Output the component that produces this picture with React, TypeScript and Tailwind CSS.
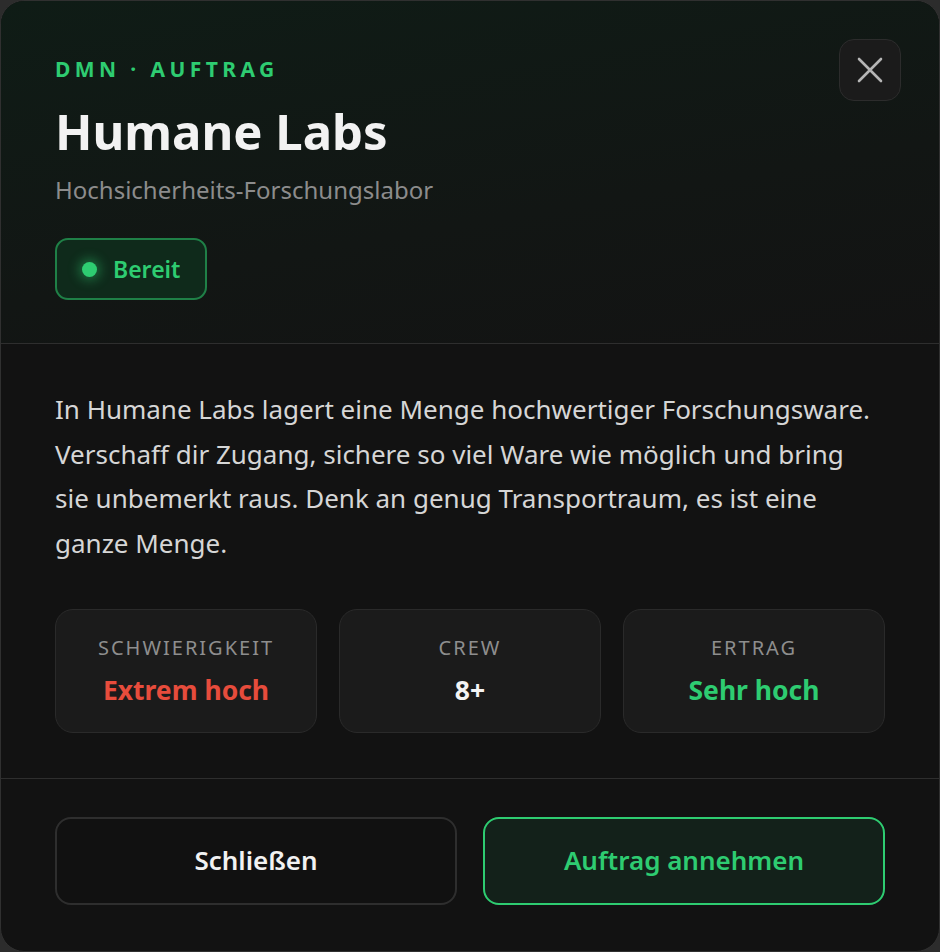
import React from "react";

const font = { fontFamily: '"Segoe UI", "Noto Sans", "Open Sans", sans-serif' };

function Stat({ label, value, color }: { label: string; value: string; color: string }) {
  return (
    <div className="flex h-[124px] flex-col items-center justify-center rounded-[18px] border border-[#2a2a2a] bg-[#1b1b1b]">
      <div className="text-[20px] leading-[26px] tracking-[0.1em] text-[#8e8e8e]">{label}</div>
      <div className={`mt-[12px] text-[26.5px] font-bold leading-[34px] ${color}`}>{value}</div>
    </div>
  );
}

export default function App() {
  return (
    <div className="h-[952px] w-[940px] bg-[#2c2c2c]" style={font}>
      <div className="flex h-[952px] w-[940px] flex-col overflow-hidden rounded-[24px] border border-[#303030] bg-[#121212]">
        <div className="flex justify-between border-b border-[#2e2e2e] bg-[linear-gradient(170deg,#0f1c16_0%,#121614_60%,#131313_100%)] pb-[43px] pl-[54px] pr-[38px] pt-[38px]">
          <div className="mt-[16px] flex flex-col items-start">
            <div className="text-[21px] font-bold leading-[28px] tracking-[0.21em] text-[#2ecc71]">DMN · AUFTRAG</div>
            <div className="mt-[18px] text-[49px] font-bold leading-[60px] text-[#f2f2f2]">Humane Labs</div>
            <div className="mt-[13px] text-[24px] leading-[32px] text-[#8c8c8c]">Hochsicherheits-Forschungslabor</div>
            <div className="mt-[32px] flex h-[62px] items-center gap-[16px] rounded-[13px] border-2 border-[#1f8047] bg-[#0f2a1b] pl-[25px] pr-[25px]">
              <span className="h-[15px] w-[15px] rounded-full bg-[#2ecc71] shadow-[0_0_12px_3px_rgba(46,204,113,0.45)]" />
              <span className="text-[23px] font-semibold leading-[30px] text-[#2ecc71]">Bereit</span>
            </div>
          </div>
          <button className="flex h-[62px] w-[62px] items-center justify-center rounded-[15px] border border-[#2c2c2c] bg-[#1b1b1b]">
            <svg width="26" height="26" viewBox="0 0 26 26" fill="none" stroke="#b5b5b5" strokeWidth="2.6" strokeLinecap="round">
              <path d="M2 2L24 24M24 2L2 24" />
            </svg>
          </button>
        </div>

        <div className="border-b border-[#2e2e2e] px-[54px] pb-[45px] pt-[43px]">
          <p className="max-w-[818px] text-[26px] leading-[44.7px] text-[#d6d6d6]">
            In Humane Labs lagert eine Menge hochwertiger Forschungsware. Verschaff dir Zugang, sichere so viel Ware wie möglich und bring sie unbemerkt raus. Denk an genug Transportraum, es ist eine ganze Menge.
          </p>
          <div className="mt-[43px] grid grid-cols-3 gap-[22px]">
            <Stat label="SCHWIERIGKEIT" value="Extrem hoch" color="text-[#e74c3c]" />
            <Stat label="CREW" value="8+" color="text-[#f4f4f4]" />
            <Stat label="ERTRAG" value="Sehr hoch" color="text-[#2ecc71]" />
          </div>
        </div>

        <div className="grid grid-cols-2 gap-[26px] px-[54px] pt-[38px]">
          <button className="flex h-[88px] items-center justify-center rounded-[16px] border-2 border-[#2e2e2e] bg-[#111111] text-[26px] font-semibold text-[#f2f2f2]">
            Schließen
          </button>
          <button className="flex h-[88px] items-center justify-center rounded-[16px] border-2 border-[#2ecc71] bg-[#13211a] text-[26px] font-semibold text-[#2ecc71]">
            Auftrag annehmen
          </button>
        </div>
      </div>
    </div>
  );
}
